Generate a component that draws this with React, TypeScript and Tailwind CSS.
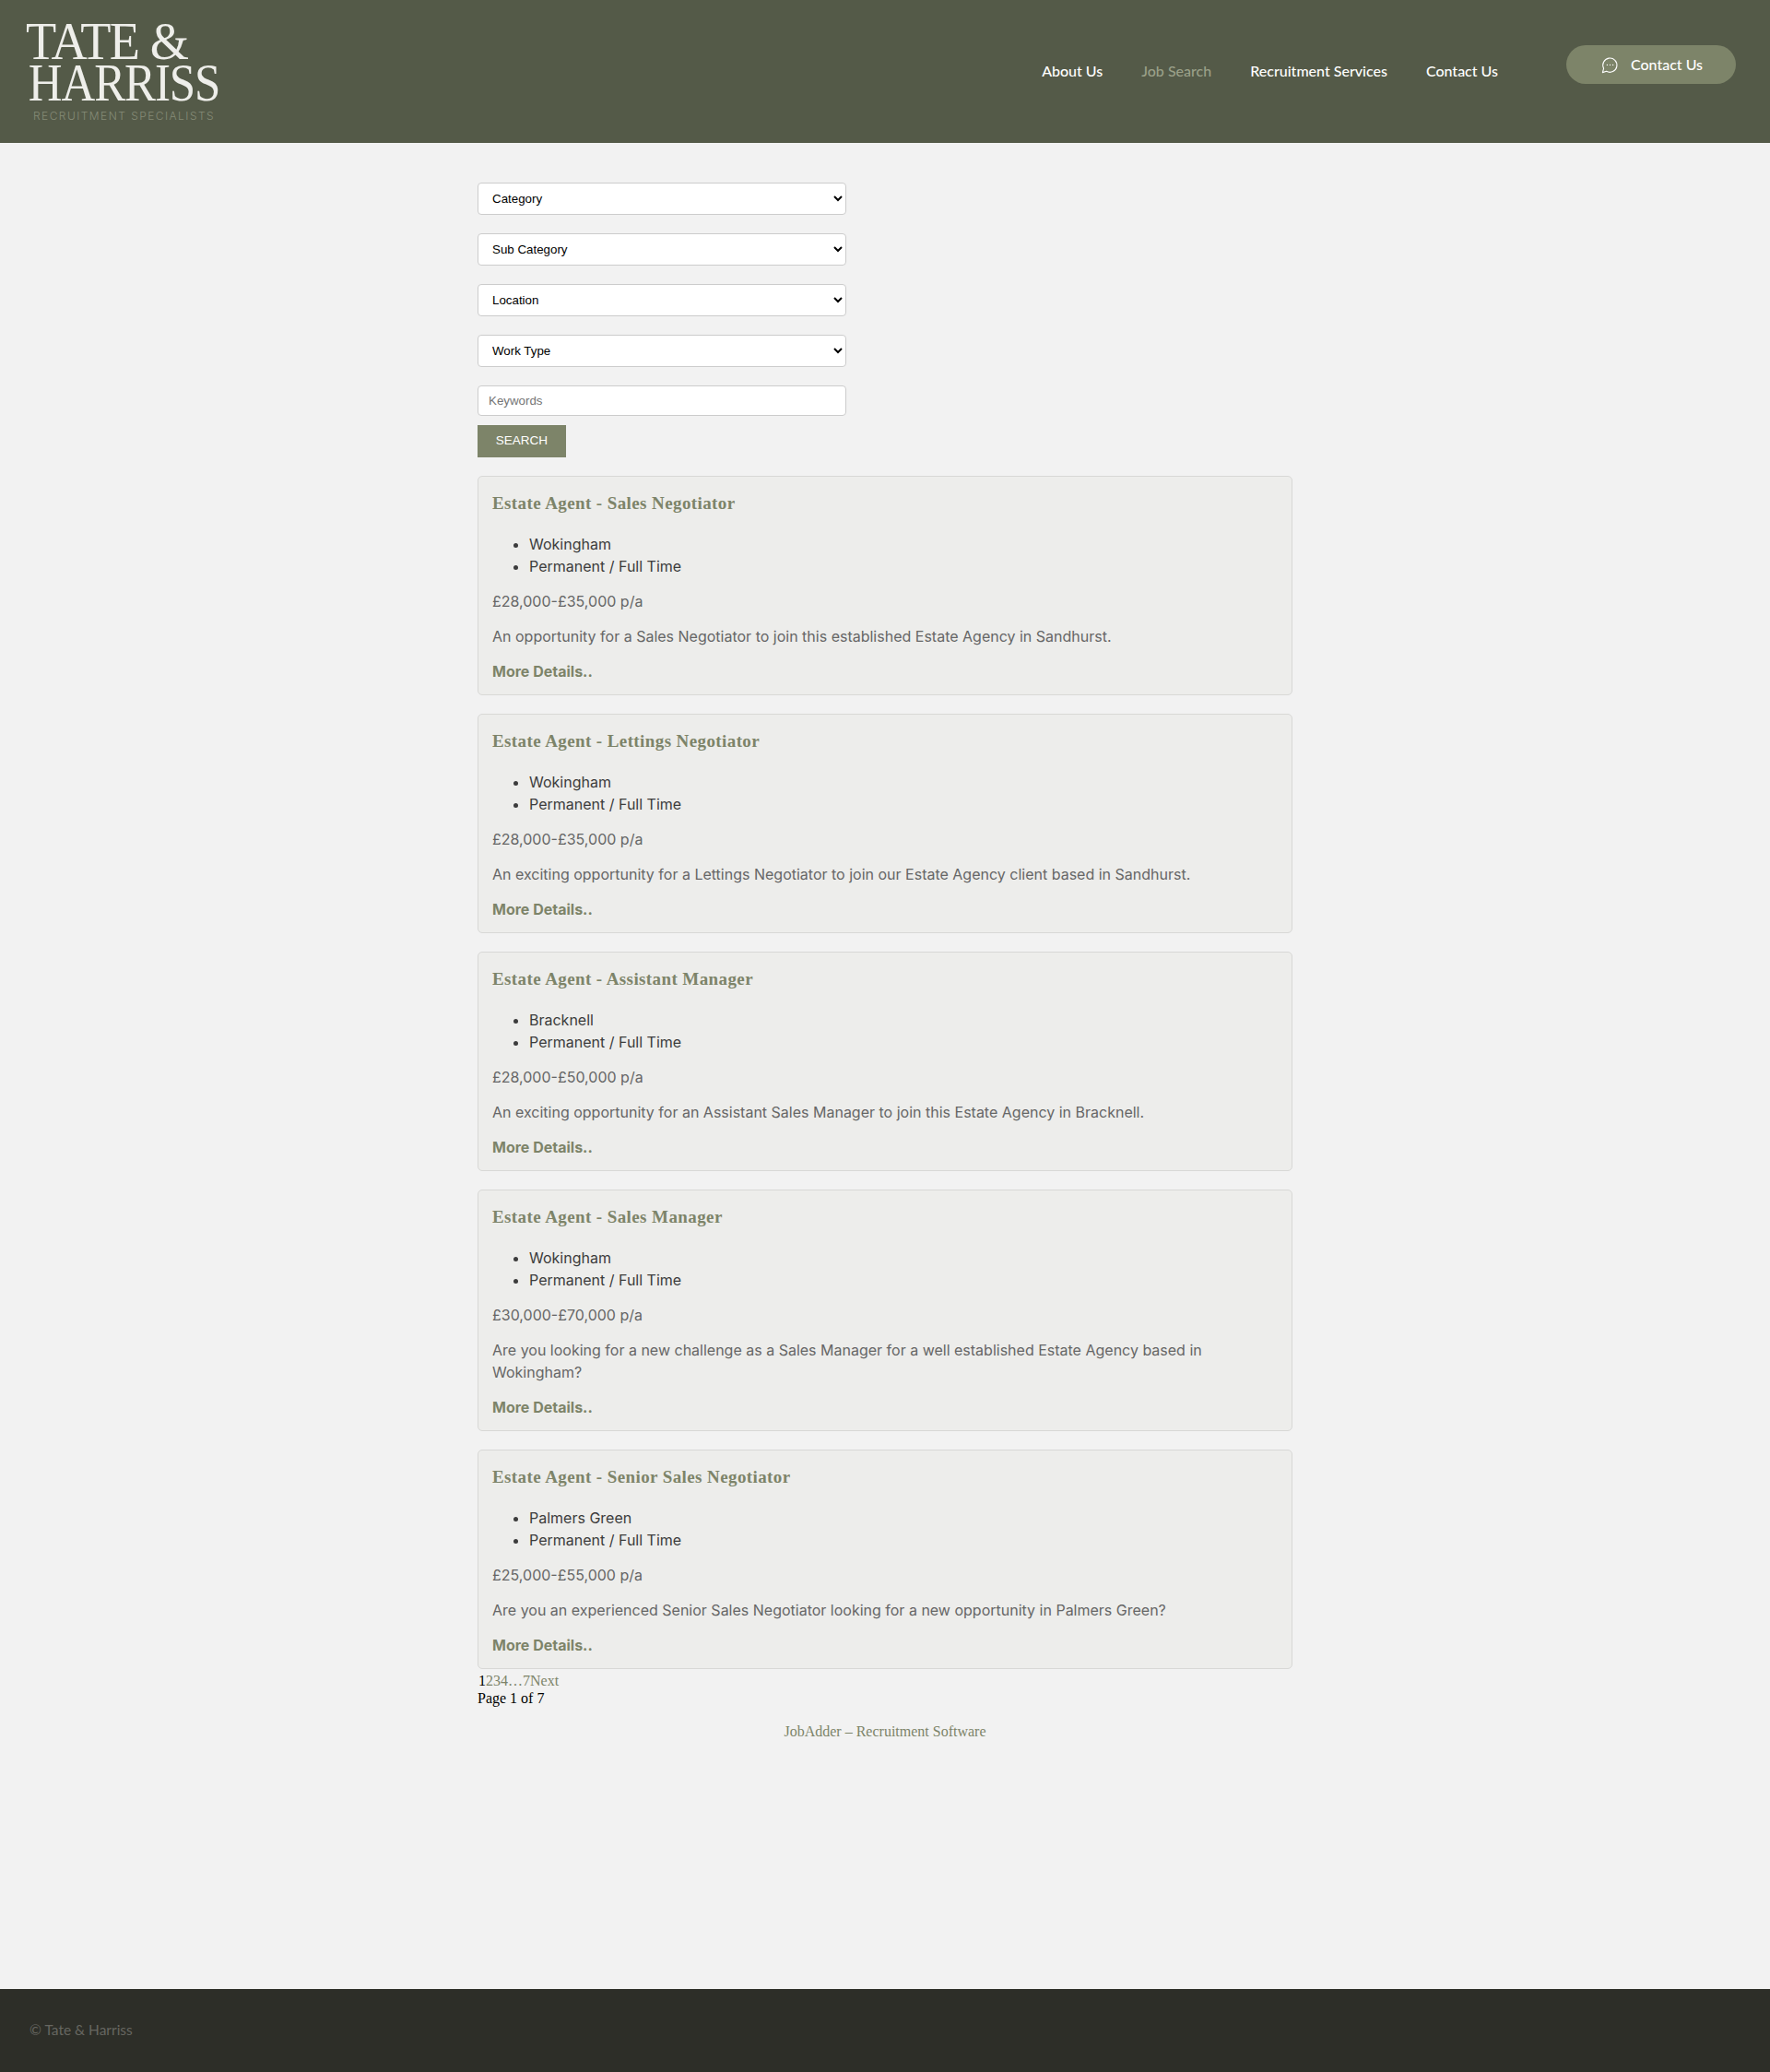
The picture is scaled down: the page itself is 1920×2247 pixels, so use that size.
const jobs = [
  { t: "Estate Agent - Sales Negotiator", l: "Wokingham", s: "£28,000-£35,000 p/a", d: "An opportunity for a Sales Negotiator to join this established Estate Agency in Sandhurst." },
  { t: "Estate Agent - Lettings Negotiator", l: "Wokingham", s: "£28,000-£35,000 p/a", d: "An exciting opportunity for a Lettings Negotiator to join our Estate Agency client based in Sandhurst." },
  { t: "Estate Agent - Assistant Manager", l: "Bracknell", s: "£28,000-£50,000 p/a", d: "An exciting opportunity for an Assistant Sales Manager to join this Estate Agency in Bracknell." },
  { t: "Estate Agent - Sales Manager", l: "Wokingham", s: "£30,000-£70,000 p/a", d: "Are you looking for a new challenge as a Sales Manager for a well established Estate Agency based in Wokingham?" },
  { t: "Estate Agent - Senior Sales Negotiator", l: "Palmers Green", s: "£25,000-£55,000 p/a", d: "Are you an experienced Senior Sales Negotiator looking for a new opportunity in Palmers Green?" },
];
const sans = "font-['Inter',sans-serif]";
const serif = "font-['Liberation_Serif',serif]";
const arial = "font-['Liberation_Sans',sans-serif]";
const nav = "font-['Lato',sans-serif]";

function Sel({ label }: { label: string }) {
  return (
    <select className={`${arial} block w-[400px] h-[35px] mb-5 pl-[11px] pr-0 bg-white border border-[#ccc] rounded-[4px] text-[13.33px] text-black appearance-auto`}>
      <option>{label}</option>
    </select>
  );
}

function ChatIcon() {
  return (
    <svg width="19" height="19" viewBox="0 0 19 19" fill="none" stroke="currentColor" strokeWidth="1.1" strokeLinecap="round" strokeLinejoin="round">
      <path d="M2.6 13.2A7.6 7.6 0 1 1 5.6 16.3L1.4 17.6Z" />
      <circle cx="6.4" cy="9.4" r="0.7" fill="currentColor" stroke="none" />
      <circle cx="9.5" cy="9.4" r="0.7" fill="currentColor" stroke="none" />
      <circle cx="12.6" cy="9.4" r="0.7" fill="currentColor" stroke="none" />
    </svg>
  );
}

export default function App() {
  return (
    <div className="min-h-[2247px] flex flex-col bg-[#f2f2f2]">
      <header className="h-[155px] bg-[#545a48] flex justify-between items-start shrink-0">
        <div className={`${serif} pl-[28px] pt-[23px] text-[#eeeeea]`}>
          <div className="text-[56px] leading-[45px] tracking-[-1.5px] scale-x-[0.97] origin-left">TATE &amp;</div>
          <div className="text-[56px] leading-[45px] tracking-[-1.2px] pl-[3px] scale-x-[0.91] origin-left">HARRISS</div>
          <div className={`${sans} font-light text-[12px] leading-[14px] tracking-[1.45px] text-[#858b77] pl-[8px] mt-[6px]`}>RECRUITMENT SPECIALISTS</div>
        </div>
        <div className={`${nav} flex items-start pr-[37px] pt-[49px] font-medium text-[16px] text-white`}>
          <nav className="flex gap-[42px] mt-[18px] mr-[74px] leading-[20px]">
            <span>About Us</span>
            <span className="text-[#9aa088]">Job Search</span>
            <span>Recruitment Services</span>
            <span>Contact Us</span>
          </nav>
          <div className="w-[184px] h-[42px] pl-[2px] rounded-[21px] bg-[#7d8469] flex items-center justify-center gap-[13px]">
            <ChatIcon />
            <span>Contact Us</span>
          </div>
        </div>
      </header>

      <main className="flex-1">
        <div className="w-[884px] mx-auto pt-[43px]">
          <Sel label="Category" />
          <Sel label="Sub Category" />
          <Sel label="Location" />
          <Sel label="Work Type" />
          <input placeholder="Keywords" className={`${arial} block w-[400px] h-[33px] px-[11px] bg-white border border-[#ccc] rounded-[4px] text-[13.33px] placeholder:text-[#757575]`} />
          <button className={`${arial} block mt-[10px] w-[96px] h-[35px] bg-[#7d8469] text-white text-[13.5px]`}>SEARCH</button>
          <div className="mt-[20px] flex flex-col gap-5">
            {jobs.map((j) => (
              <div key={j.t} className={`${sans} bg-[#ededeb] border border-[#d8d8d6] rounded-[5px] px-[15px] pt-[17px] pb-[13px] text-[16px] leading-[24px] text-[#666]`}>
                <h2 className={`${serif} font-bold text-[19px] leading-[24px] tracking-[0.4px] text-[#7d8469]`}>{j.t}</h2>
                <ul className="list-disc pl-10 mt-5 mb-[14px] text-[#3c3c3c]">
                  <li>{j.l}</li>
                  <li>Permanent / Full Time</li>
                </ul>
                <p className="mb-[14px]">{j.s}</p>
                <p className="mb-[14px]">{j.d}</p>
                <a className="block font-bold text-[#7d8469]">More Details..</a>
              </div>
            ))}
          </div>
          <div className={`${serif} text-[16px] leading-[18px] text-black mt-[4px]`}>
            <div className="text-[#7d8469]"><span className="text-black pl-px">1</span>234…7Next</div>
            <div className="mt-px">Page 1 of 7</div>
            <div className="text-[#7d8469] text-center mt-[18px]">JobAdder – Recruitment Software</div>
          </div>
        </div>
      </main>

      <footer className="h-[90px] bg-[#2d2e28] shrink-0 flex items-center pl-[32px]">
        <span className={`${nav} text-[15.5px] text-[#666660]`}>© Tate &amp; Harriss</span>
      </footer>
    </div>
  );
}
